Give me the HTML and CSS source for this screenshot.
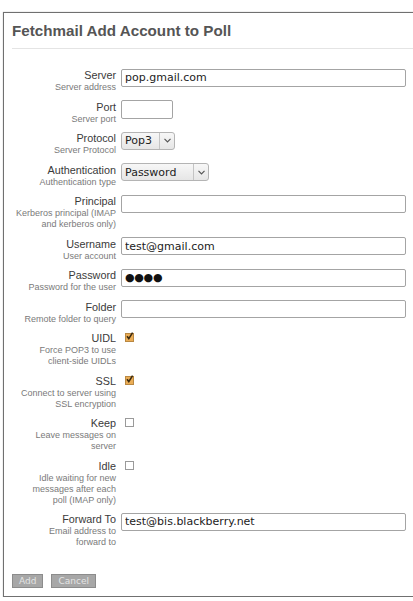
FILE: index.html
```html
<!DOCTYPE html>
<html lang="en">

<head>
    <meta charset="UTF-8">
    <meta name="viewport" content="width=device-width, initial-scale=1.0">
    <title>Fetchmail Add Account to Poll</title>
    <link rel="stylesheet" href="styles.css">
</head>

<body>
    <div class="panel">
        <h2 class="panel-title">Fetchmail Add Account to Poll</h2>

        <form class="account-form">
            <div class="row">
                <div class="field-label"><label for="server">Server</label><span class="hint">Server address</span></div>
                <div class="field"><input type="text" id="server" class="text wide" value="pop.gmail.com"></div>
            </div>
            <div class="row">
                <div class="field-label"><label for="port">Port</label><span class="hint">Server port</span></div>
                <div class="field"><input type="text" id="port" class="text port"></div>
            </div>
            <div class="row">
                <div class="field-label"><label for="protocol">Protocol</label><span class="hint">Server Protocol</span></div>
                <div class="field">
                    <div class="select protocol">
                        <select id="protocol">
                            <option>Pop3</option>
                            <option>IMAP</option>
                        </select>
                        <span class="arrow"><svg width="7" height="5" viewBox="0 0 7 5"><path d="M0.5 0.8 L3.5 3.8 L6.5 0.8" fill="none" stroke="#555" stroke-width="1.2"/></svg></span>
                    </div>
                </div>
            </div>
            <div class="row">
                <div class="field-label"><label for="auth">Authentication</label><span class="hint">Authentication type</span></div>
                <div class="field">
                    <div class="select auth">
                        <select id="auth">
                            <option>Password</option>
                            <option>Kerberos</option>
                        </select>
                        <span class="arrow"><svg width="7" height="5" viewBox="0 0 7 5"><path d="M0.5 0.8 L3.5 3.8 L6.5 0.8" fill="none" stroke="#555" stroke-width="1.2"/></svg></span>
                    </div>
                </div>
            </div>
            <div class="row">
                <div class="field-label"><label for="principal">Principal</label><span class="hint">Kerberos principal (IMAP<br>and kerberos only)</span></div>
                <div class="field"><input type="text" id="principal" class="text wide"></div>
            </div>
            <div class="row">
                <div class="field-label"><label for="username">Username</label><span class="hint">User account</span></div>
                <div class="field"><input type="text" id="username" class="text wide" value="test@gmail.com"></div>
            </div>
            <div class="row">
                <div class="field-label"><label for="password">Password</label><span class="hint">Password for the user</span></div>
                <div class="field"><input type="text" id="password" class="text wide secret" value="●●●●" readonly></div>
            </div>
            <div class="row">
                <div class="field-label"><label for="folder">Folder</label><span class="hint">Remote folder to query</span></div>
                <div class="field"><input type="text" id="folder" class="text wide"></div>
            </div>
            <div class="row">
                <div class="field-label"><label>UIDL</label><span class="hint">Force POP3 to use<br>client-side UIDLs</span></div>
                <div class="field"><span class="check on"><svg width="9" height="9" viewBox="0 0 9 9"><path d="M2 4.2 L3.8 6.6 L7.6 0.6" fill="none" stroke="#3a2a10" stroke-width="1.6"/></svg></span></div>
            </div>
            <div class="row">
                <div class="field-label"><label>SSL</label><span class="hint">Connect to server using<br>SSL encryption</span></div>
                <div class="field"><span class="check on"><svg width="9" height="9" viewBox="0 0 9 9"><path d="M2 4.2 L3.8 6.6 L7.6 0.6" fill="none" stroke="#3a2a10" stroke-width="1.6"/></svg></span></div>
            </div>
            <div class="row">
                <div class="field-label"><label>Keep</label><span class="hint">Leave messages on<br>server</span></div>
                <div class="field"><span class="check"></span></div>
            </div>
            <div class="row">
                <div class="field-label"><label>Idle</label><span class="hint">Idle waiting for new<br>messages after each<br>poll (IMAP only)</span></div>
                <div class="field"><span class="check"></span></div>
            </div>
            <div class="row">
                <div class="field-label"><label for="forward">Forward To</label><span class="hint">Email address to<br>forward to</span></div>
                <div class="field"><input type="text" id="forward" class="text wide" value="test@bis.blackberry.net"></div>
            </div>

            <div class="actions">
                <button type="button" class="btn">Add</button>
                <button type="button" class="btn">Cancel</button>
            </div>
        </form>
    </div>
</body>

</html>
```

FILE: styles.css
```css
body {
    margin: 0;
    background-color: #fff;
    font-family: "Liberation Sans", Arial, sans-serif;
    overflow: hidden;
}

.panel {
    margin: 12px -20px 0 3px;
    padding: 0 0 8px 8px;
    border: 1px solid #707070;
    box-shadow: 0 0 1px #aaa;
}

.panel-title {
    margin: 0;
    padding: 9px 0 8px;
    border-bottom: 1px solid #e4e4e4;
    font-size: 15.2px;
    line-height: 18px;
    font-weight: bold;
    color: #555;
}

.account-form {
    margin-top: 18px;
}

.row {
    display: grid;
    grid-template-columns: 104px 1fr;
    column-gap: 5px;
    margin-bottom: 5.5px;
}

.field-label {
    padding-top: 1px;
    text-align: right;
    white-space: nowrap;
}

.field-label label {
    display: block;
    font-size: 10.8px;
    font-weight: normal;
    line-height: 14px;
    color: #3a3a3a;
}

.hint {
    display: block;
    font-size: 9px;
    line-height: 11px;
    color: #7a7a7a;
}

/* text inputs */
.text {
    box-sizing: border-box;
    height: 18px;
    margin: 0;
    padding: 0 3px;
    border: 1px solid #a4a4a4;
    border-radius: 2px;
    font-family: "DejaVu Sans", sans-serif;
    font-size: 11px;
    color: #222;
    background-color: #fff;
    outline: none;
}

.text.wide {
    width: 285px;
}

.text.port {
    width: 52px;
    height: 19px;
}

.text.secret {
    letter-spacing: -0.3px;
    color: #111;
}

/* dropdowns */
.select {
    display: inline-flex;
    box-sizing: border-box;
    height: 18px;
    border: 1px solid #b4b4b4;
    border-radius: 3px;
    background: linear-gradient(#f7f7f7, #e6e6e6);
}

.select select {
    -webkit-appearance: none;
    appearance: none;
    flex: 1;
    margin: 0;
    padding: 0 3px;
    border: none;
    background: transparent;
    font-family: "DejaVu Sans", sans-serif;
    font-size: 11px;
    color: #222;
    outline: none;
}

.select.protocol {
    width: 54px;
}

.select.auth {
    width: 88px;
}

.select .arrow {
    display: flex;
    align-items: center;
    justify-content: center;
    width: 14px;
    border-left: 1px solid #c4c4c4;
}

/* checkboxes */
.check {
    display: block;
    box-sizing: border-box;
    width: 9px;
    height: 9px;
    margin: 3px 0 0 4px;
    border: 1px solid #9a9a9a;
    background-color: #fff;
    position: relative;
}

.check.on {
    background-color: #ebad56;
    border-color: #b98842;
}

.check svg {
    position: absolute;
    top: -2px;
    left: -1px;
}

.actions {
    display: flex;
    gap: 8px;
    margin-top: 26px;
}

.btn {
    box-sizing: border-box;
    height: 14px;
    margin: 0;
    padding: 0 6px;
    border: 1px solid #8c8c8c;
    border-radius: 0;
    background-color: #a7a7a7;
    font-family: "DejaVu Sans", sans-serif;
    font-size: 9px;
    line-height: 12px;
    color: #e4e4e4;
}
```
